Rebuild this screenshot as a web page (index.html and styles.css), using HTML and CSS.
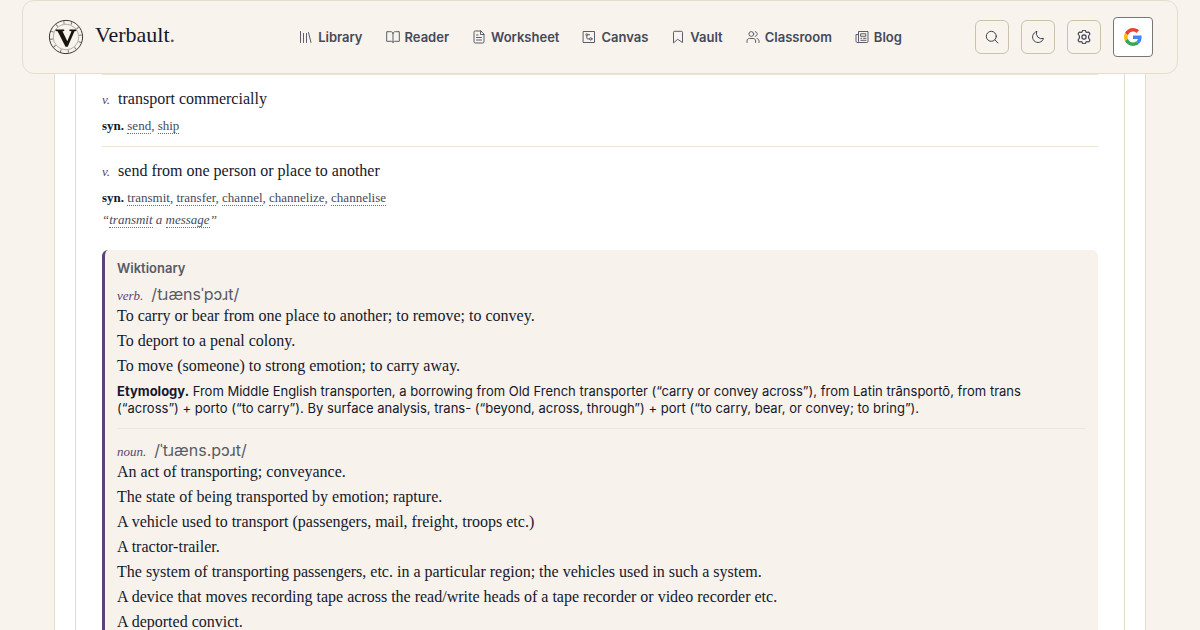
FILE: index.html
```html
<!DOCTYPE html>
<html lang="en">
	<head>
		<meta charset="utf-8">
		<meta name="viewport" content="width=device-width, initial-scale=1">
		<title>Verbault. transport</title>
		<link rel="stylesheet" href="styles.css">
	</head>
	<body>
		<header class="topbar">
			<a class="brand" href="#">
				<svg class="brand-mark" viewBox="0 0 36 36" aria-hidden="true">
					<circle cx="18" cy="18" r="16.6" fill="none" stroke="#3a3935" stroke-width="1"/>
					<circle cx="18" cy="18" r="14.6" fill="none" stroke="#77756f" stroke-width="2.6" stroke-dasharray="1 6.64" stroke-dashoffset="3"/>
					<circle cx="18" cy="18" r="12.8" fill="none" stroke="#a19e96" stroke-width=".8"/>
					<path d="M7.6 10.4h8.6v1.5l-1.7.4 4.8 10 4.2-10-2-.4v-1.5h6.8v1.5l-1.8.4-6.8 15.4h-2.2L9.6 12.3l-2-.4z" fill="#16150f"/>
				</svg>
				<span class="brand-name">Verbault<span class="dot">.</span></span>
			</a>
			<nav class="nav">
				<a href="#">
					<svg viewBox="0 0 14 14"><path d="M1.500 1.500v11M4.500 3.500v9M7.500 3.500v9M9.500 2.500l2.500 10"/></svg>
					Library
				</a>
				<a href="#">
					<svg viewBox="0 0 14 14"><path d="M7 3.2C6.6 2 5.8 1.7 4.800 1.700H.7v9.600h4.300c1 0 1.700.3 2 1.300.3-1 1-1.300 2-1.300h4.300V1.700H9.200C8.200 1.700 7.400 2 7 3.200zM7 3.200v9"/></svg>
					Reader
				</a>
				<a href="#">
					<svg viewBox="0 0 14 14"><path d="M8.500 1H3.200C2.300 1 2 1.500 2 2.200v9.600c0 .7.400 1.200 1.200 1.200h7.600c.8 0 1.200-.5 1.200-1.200V4.500zM8.500 1v3.500H12M4.500 5h1.500M4.500 7.500h5M4.500 10h5"/></svg>
					Worksheet
				</a>
				<a href="#">
					<svg viewBox="0 0 14 14"><rect x="1.500" y="1.500" width="11" height="11"/><circle cx="4.800" cy="4.700" r="1"/><circle cx="8.800" cy="8.900" r="1.200"/><path d="M4.800 5.700v2.200c0 .7.3 1 1 1h1.800M6 4.700h1.500"/></svg>
					Canvas
				</a>
				<a href="#">
					<svg viewBox="0 0 14 14"><path d="M2.500 12.500V2.200c0-.5.3-.9.900-.9h7.200c.6 0 .9.400.9.900v10.300L7 9.500z"/></svg>
					Vault
				</a>
				<a href="#">
					<svg viewBox="0 0 14 14"><circle cx="5.300" cy="4" r="2.400"/><path d="M1 12.500V11c0-1.700 1-2.500 2.500-2.500h3.600c1.500 0 2.500.8 2.500 2.500v1.500M9.300 1.700c1.300.3 1.900 1.200 1.900 2.300s-.6 2-1.900 2.300M11 8.500c1.300.3 2 1.200 2 2.500v1.500"/></svg>
					Classroom
				</a>
				<a href="#">
					<svg viewBox="0 0 14 14"><path d="M3.500 4.500H1v6.300c0 1 .5 1.700 1.300 1.700h9.500c.8 0 1.200-.4 1.200-1.200V1.500H3.500v9.700c0 .8-.4 1.300-1.200 1.300M8.500 8.300h2.500M5.800 10.300H11M5.800 8.300h.8"/><rect x="6" y="3.800" width="4.800" height="2.500"/></svg>
					Blog
				</a>
			</nav>
			<div class="actions">
				<button class="icon-btn" type="button" aria-label="Search">
					<svg viewBox="0 0 14 14"><circle cx="6.300" cy="6.300" r="5"/><path d="M10 10l3 3"/></svg>
				</button>
				<button class="icon-btn" type="button" aria-label="Dark mode">
					<svg viewBox="0 0 14 14"><path d="M5.600 1.500a5.400 5.400 0 0 0 6.900 6.900A5.600 5.600 0 1 1 5.600 1.500z"/></svg>
				</button>
				<button class="icon-btn" type="button" aria-label="Settings">
					<svg viewBox="1 1 12 12"><path d="M5.500 2.200C5.700.9 8.300.9 8.500 2.200c.1.700.8 1 1.400.7 1.500-.7 2.800 1.500 1.500 2.500-.7.500-.7 2.700 0 3.200 1.300 1 0 3.200-1.500 2.500-.6-.3-1.300 0-1.400.7-.2 1.300-2.800 1.300-3 0-.1-.7-.8-1-1.400-.7-1.500.7-2.800-1.500-1.500-2.500.7-.5.700-2.700 0-3.200-1.300-1 0-3.200 1.500-2.500.6.300 1.300 0 1.400-.7z"/><circle cx="7" cy="7" r="1.800"/></svg>
				</button>
				<button class="google-btn" type="button" aria-label="Sign in with Google">
					<svg viewBox="0 0 48 48">
						<path fill="#ea4335" d="M24 9.500c3.540 0 6.710 1.220 9.210 3.600l6.850-6.850C35.900 2.380 30.470 0 24 0 14.620 0 6.510 5.380 2.560 13.220l7.980 6.190C12.430 13.720 17.740 9.500 24 9.500z"/>
						<path fill="#4285f4" d="M46.980 24.550c0-1.570-.15-3.090-.38-4.550H24v9.020h12.940c-.58 2.960-2.260 5.480-4.780 7.180l7.730 6c4.510-4.180 7.090-10.360 7.090-17.650z"/>
						<path fill="#fbbc05" d="M10.530 28.590c-.48-1.450-.76-2.990-.76-4.590s.27-3.140.76-4.590l-7.980-6.190C.92 16.460 0 20.120 0 24s.92 7.540 2.560 10.780z"/>
						<path fill="#34a853" d="M24 48c6.480 0 11.930-2.130 15.890-5.810l-7.730-6c-2.150 1.450-4.920 2.300-8.160 2.300-6.260 0-11.570-4.220-13.470-9.910l-7.980 6.190C6.510 42.620 14.620 48 24 48z"/>
					</svg>
				</button>
			</div>
		</header>

		<main class="sheet">
			<article class="entry">
				<section class="sense">
					<p class="def"><i class="pos">v.</i>transport commercially</p>
					<p class="syn"><b>syn.</b> <a href="#">send</a>, <a href="#">ship</a></p>
				</section>
				<section class="sense">
					<p class="def"><i class="pos">v.</i>send from one person or place to another</p>
					<p class="syn"><b>syn.</b> <a href="#">transmit</a>, <a href="#">transfer</a>, <a href="#">channel</a>, <a href="#">channelize</a>, <a href="#">channelise</a></p>
					<p class="quote">“<a href="#">transmit</a> a <a href="#">message</a>”</p>
				</section>

				<section class="wiktionary">
					<h2>Wiktionary</h2>
					<div class="group">
						<p class="group-head"><i class="pos">verb.</i><span class="ipa">/tɹænsˈpɔɹt/</span></p>
						<ul>
							<li>To carry or bear from one place to another; to remove; to convey.</li>
							<li>To deport to a penal colony.</li>
							<li>To move (someone) to strong emotion; to carry away.</li>
						</ul>
						<p class="etymology"><b>Etymology.</b> From Middle English transporten, a borrowing from Old French transporter (“carry or convey across”), from Latin trānsportō, from trans (“across”) + porto (“to carry”). By surface analysis, trans- (“beyond, across, through”) + port (“to carry, bear, or convey; to bring”).</p>
					</div>
					<div class="group">
						<p class="group-head"><i class="pos">noun.</i><span class="ipa">/ˈtɹæns.pɔɹt/</span></p>
						<ul>
							<li>An act of transporting; conveyance.</li>
							<li>The state of being transported by emotion; rapture.</li>
							<li>A vehicle used to transport (passengers, mail, freight, troops etc.)</li>
							<li>A tractor-trailer.</li>
							<li>The system of transporting passengers, etc. in a particular region; the vehicles used in such a system.</li>
							<li>A device that moves recording tape across the read/write heads of a tape recorder or video recorder etc.</li>
							<li>A deported convict.</li>
						</ul>
					</div>
				</section>
			</article>
		</main>
	</body>
</html>
```
FILE: styles.css
```css
*{
	margin: 0;
	padding: 0;
	box-sizing: border-box;
}
body{
	background-color: #f8f3ec;
	color: #14182b;
	font-family: Inter, "Liberation Sans", sans-serif;
}
ul{
	list-style: none;
}
a{
	color: inherit;
	text-decoration: none;
}

/* top bar */
.topbar{
	display: grid;
	grid-template-columns: 1fr auto 1fr;
	align-items: center;
	min-height: 74px;
	margin: 0 22px;
	padding: 0 24px 0 25px;
	background-color: #f8f3ec;
	border: 1px solid #e5ddce;
	border-radius: 12px;
}
.brand{
	display: flex;
	align-items: center;
	gap: 11px;
}
.brand-mark{
	width: 36px;
	height: 36px;
}
.brand-name{
	padding-bottom: 4px;
	font-family: "Liberation Serif", serif;
	font-size: 22px;
	line-height: 28px;
}
.dot{
	color: #5b4378;
}
.nav{
	display: flex;
	gap: 23px;
}
.nav a{
	display: flex;
	align-items: center;
	gap: 5px;
	font-size: 13px;
	font-weight: 600;
	line-height: 20px;
	color: #454a59;
}
.nav svg,
.icon-btn svg{
	width: 14px;
	height: 14px;
	fill: none;
	stroke: #5a5e6b;
	stroke-width: 1;
	stroke-linecap: round;
	stroke-linejoin: round;
}
.actions{
	display: flex;
	align-items: center;
	justify-content: flex-end;
	gap: 12px;
}
.icon-btn,
.google-btn{
	display: flex;
	align-items: center;
	justify-content: center;
	width: 34px;
	height: 34px;
	background-color: transparent;
	border: 1px solid #cbc2ad;
	border-radius: 6px;
	cursor: pointer;
}
.icon-btn svg{
	stroke: #3c4052;
}
.google-btn{
	width: 40px;
	height: 40px;
	background-color: #fff;
	border-color: #747775;
	border-radius: 4px;
}
.google-btn svg{
	width: 18px;
	height: 18px;
}

/* page */
.sheet{
	margin: 0 54px;
	padding: 0 20px;
	background-color: #fff;
	border: 1px solid #e5ddce;
	border-width: 0 1px;
}
.entry{
	padding: 0 26px;
	border: 1px solid #e5ddce;
	border-width: 0 1px;
}
.sense{
	padding: 13px 0 10px;
	border-top: 1px solid #ede6d8;
	font-family: "Liberation Serif", serif;
}
.def{
	font-size: 16px;
	line-height: 22px;
}
.pos{
	margin-right: 8px;
	font-family: "Liberation Serif", serif;
	font-size: 13px;
	color: #5b4378;
}
.syn{
	margin-top: 5px;
	font-size: 13px;
	line-height: 20px;
	color: #454a59;
}
.syn b{
	color: #14182b;
}
.syn a,
.quote a{
	border-bottom: 1px dotted #6b6f7a;
}
.quote{
	margin-top: 2px;
	font-size: 13px;
	font-style: italic;
	line-height: 20px;
	color: #454a59;
}
.wiktionary{
	margin-top: 10px;
	padding: 8px 12px 16px;
	background-color: #f7f2eb;
	border-left: 3px solid #5b4378;
	border-radius: 6px;
}
.wiktionary h2{
	font-size: 13px;
	font-weight: 600;
	line-height: 20px;
	color: #575b66;
}
.group{
	padding-bottom: 11px;
}
.group + .group{
	padding-top: 5px;
	border-top: 1px solid #ede6dc;
}
.group-head{
	padding-top: 9px;
	line-height: 15px;
}
.ipa{
	font-size: 16px;
	color: #575b66;
}
.group li{
	font-family: "Liberation Serif", serif;
	font-size: 16px;
	line-height: 25px;
}
.etymology{
	margin-top: 5px;
	font-size: 13px;
	line-height: 17px;
}
```
